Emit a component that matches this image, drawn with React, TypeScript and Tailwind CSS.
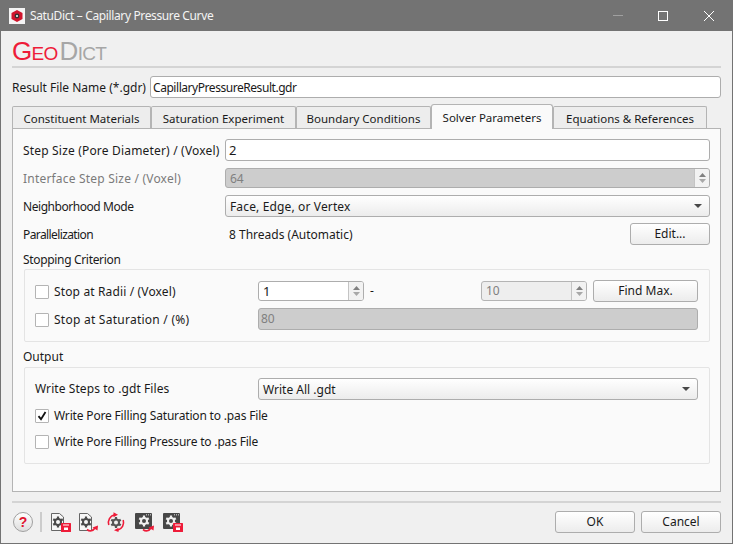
const FONT = "font-['Noto_Sans','Open_Sans',sans-serif]";

function Spin({ size = 20 }: { size?: number }) {
  return (
    <div className="flex w-[15px] shrink-0 flex-col items-center justify-center gap-[2px] border-l border-[#c4c4c4] bg-[#f2f2f2]" style={{ height: size - 2 }}>
      <svg width="7" height="4" viewBox="0 0 7 4"><path d="M3.5 0L7 4H0z" fill="#808080" /></svg>
      <svg width="7" height="4" viewBox="0 0 7 4"><path d="M0 0h7L3.5 4z" fill="#a8a8a8" /></svg>
    </div>
  );
}

function Arrow() {
  return (
    <svg width="8" height="4" viewBox="0 0 8 4" className="mr-[7px] shrink-0"><path d="M0 0h8L4 4z" fill="#484848" /></svg>
  );
}

function Combo({ text, className }: { text: string; className: string }) {
  return (
    <div className={`flex h-[22px] items-center justify-between rounded-[3px] border border-[#adadad] bg-gradient-to-b from-[#ffffff] to-[#ececec] pl-[4px] ${className}`}>
      <span className="pt-[2px]">{text}</span>
      <Arrow />
    </div>
  );
}

function Button({ text, className }: { text: string; className: string }) {
  return (
    <div className={`flex h-[22px] items-center justify-center rounded-[3px] border border-[#adadad] bg-gradient-to-b from-[#ffffff] to-[#ececec] ${className}`}>
      {text}
    </div>
  );
}

function Check({ checked, label, labelClass = "" }: { checked?: boolean; label: string; labelClass?: string }) {
  return (
    <div className="flex items-center">
      <div className="mr-[5px] flex h-[14px] w-[14px] items-center justify-center rounded-[1px] border border-[#b4b4b4] bg-white">
        {checked && (
          <svg width="10" height="10" viewBox="0 0 10 10"><path d="M1.5 5.2L4 8.2L8.5 1" fill="none" stroke="#111" strokeWidth="1.8" /></svg>
        )}
      </div>
      <span className={labelClass}>{label}</span>
    </div>
  );
}

function Gear({ cx, cy, fill = "#4a4a4a", hole = "#f6f6f6" }: { cx: number; cy: number; fill?: string; hole?: string }) {
  return (
    <g>
      {[0, 60, 120].map((a) => (
        <rect key={a} x={cx - 1.1} y={cy - 5.5} width="2.2" height="11" fill={fill} transform={`rotate(${a} ${cx} ${cy})`} />
      ))}
      <circle cx={cx} cy={cy} r="4" fill={fill} />
      <circle cx={cx} cy={cy} r="2" fill={hole} />
    </g>
  );
}

function Page() {
  return <path d="M1.5 1.5H9.5L13.5 5V18.5H1.5z" fill="#f6f6f6" stroke="#666" strokeWidth="1" />;
}

function Dark() {
  return (
    <g>
      <rect x="1" y="1" width="17" height="16" rx="1" fill="#474747" />
      <rect x="12" y="2" width="1" height="1.5" fill="#b0b0b0" />
      <rect x="14" y="2" width="1" height="1.5" fill="#b0b0b0" />
      <rect x="16" y="2" width="1" height="1.5" fill="#b0b0b0" />
    </g>
  );
}

function Disk() {
  return (
    <g>
      <rect x="11" y="11" width="10" height="9" rx="0.5" fill="#ee1c39" />
      <rect x="13" y="12.5" width="6" height="1" fill="#fff" />
      <rect x="14" y="15.5" width="4" height="2.5" fill="#fff" />
    </g>
  );
}

function Swoosh() {
  return (
    <g>
      <path d="M9 17.5C12 19.8 15 19 17 16" fill="none" stroke="#ee1c39" strokeWidth="1.6" />
      <path d="M20 13.5L19.5 18.5L14.5 15.5z" fill="#ee1c39" />
    </g>
  );
}

function ToolIcon({ kind }: { kind: number }) {
  return (
    <svg width="22" height="20" viewBox="0 0 22 20" className="shrink-0">
      {kind === 0 && (<><Page /><Gear cx={8} cy={10} /><Disk /></>)}
      {kind === 1 && (<><Page /><Gear cx={8} cy={10} /><Swoosh /></>)}
      {kind === 2 && (
        <>
          <Gear cx={10} cy={10.5} fill="#555555" hole="#f0f0f0" />
          <path d="M2.8 13A8 8 0 0 1 8.5 2.8" fill="none" stroke="#ee1c39" strokeWidth="1.6" />
          <path d="M17.2 8A8 8 0 0 1 11.5 18.2" fill="none" stroke="#ee1c39" strokeWidth="1.6" />
          <path d="M7.5 0.3L12 2.8L7.5 5.3z" fill="#ee1c39" />
          <path d="M12.5 15.7L8 18.2L12.5 20z" fill="#ee1c39" />
        </>
      )}
      {kind === 3 && (<><Dark /><Gear cx={10} cy={9} fill="#f0f0f0" hole="#474747" /><Swoosh /></>)}
      {kind === 4 && (<><Dark /><Gear cx={9} cy={9} fill="#f0f0f0" hole="#474747" /><Disk /></>)}
    </svg>
  );
}

export default function App() {
  const tabs = [
    { label: "Constituent Materials", w: "w-[139px]" },
    { label: "Saturation Experiment", w: "w-[145px]" },
    { label: "Boundary Conditions", w: "w-[135px]" },
  ];

  return (
    <div className={`flex h-[544px] w-[733px] flex-col overflow-hidden bg-[#737373] text-[12px] leading-none text-[#1a1a1a] ${FONT}`}>
      {/* Title bar */}
      <div className="flex h-[31px] shrink-0 items-center text-white">
        <div className="ml-[9px] flex h-[16px] w-[16px] items-center justify-center bg-[#f4f4f4]">
          <svg width="14" height="14" viewBox="0 0 14 14">
            <path d="M7 1L12.5 4V10L7 13L1.5 10V4z" fill="#d0142c" />
            <circle cx="7" cy="7" r="2.4" fill="#333" />
            <circle cx="7" cy="7" r="1" fill="#fff" />
          </svg>
        </div>
        <span className="ml-[5px] tracking-[-0.37px] text-[#f4f4f4]">SatuDict – Capillary Pressure Curve</span>
        <div className="ml-auto mr-[19px] flex items-center">
          <div className="mr-[35px] h-[1px] w-[10px] bg-[#a0a0a0]" />
          <div className="mr-[36px] h-[10px] w-[10px] border border-white" />
          <svg width="10" height="10" viewBox="0 0 10 10"><path d="M0 0L10 10M10 0L0 10" stroke="#fff" strokeWidth="1" /></svg>
        </div>
      </div>

      {/* Window body */}
      <div className="mx-[1px] mb-[1px] flex min-h-0 flex-1 flex-col bg-[#f0f0f0] px-[11px]">
        {/* Logo */}
        <div className="mt-[6px] h-[31px] shrink-0 border-b-2 border-[#d4d4d4] font-['Liberation_Sans',sans-serif] leading-[28px] tracking-[-0.7px]">
          <span className="text-[26px] text-[#ee1c39]">G</span>
          <span className="text-[19px] text-[#ee1c39]">EO</span>
          <span className="ml-[2px] text-[26px] text-[#a6a6a6]">D</span>
          <span className="text-[19px] text-[#a6a6a6]">ICT</span>
        </div>

        {/* Result file */}
        <div className="mt-[8px] flex h-[22px] shrink-0 items-center">
          <span className="w-[138px] pt-[1px]">Result File Name (*.gdr)</span>
          <div className="flex h-[22px] flex-1 items-center rounded-[3px] border border-[#adadad] bg-white pl-[2px] pt-[1px] tracking-[-0.45px]">CapillaryPressureResult.gdr</div>
        </div>

        {/* Tabs */}
        <div className="relative z-10 mt-[6px] flex h-[24px] shrink-0 items-end text-[11.5px]">
          {tabs.map((t) => (
            <div key={t.label} className={`flex h-[22px] items-center justify-center rounded-t-[2px] border border-b-0 border-[#b4b4b4] bg-[#ededed] pt-[2px] ${t.w}`}>{t.label}</div>
          ))}
          <div className="-mb-[1px] flex h-[25px] w-[122px] items-center justify-center rounded-t-[3px] border border-b-0 border-[#b4b4b4] bg-[#fafafa] pt-[1px]">Solver Parameters</div>
          <div className="flex h-[22px] w-[154px] items-center justify-center rounded-t-[2px] border border-b-0 border-[#b4b4b4] bg-[#ededed] pt-[2px]">Equations &amp; References</div>
        </div>

        {/* Panel */}
        <div className="h-[364px] shrink-0 border border-[#b4b4b4] bg-[#fafafa] pl-[10px] pr-[10px] pt-[10px]">
          <div className="flex h-[22px] items-center">
            <span className="w-[202px] pt-[2px] tracking-[0.18px]">Step Size (Pore Diameter) / (Voxel)</span>
            <div className="flex h-[22px] flex-1 items-center rounded-[3px] border border-[#adadad] bg-white pl-[3px] pt-[1px] text-[13px]">2</div>
          </div>
          <div className="mt-[7px] flex h-[20px] items-center text-[#7a7a7a]">
            <span className="w-[202px] pt-[2px] tracking-[0.2px]">Interface Step Size / (Voxel)</span>
            <div className="flex h-[20px] flex-1 items-center justify-between overflow-hidden rounded-[3px] border border-[#adadad] bg-[#cdcdcd] pl-[4px] text-[#808080]">
              <span className="pt-[2px]">64</span>
              <Spin />
            </div>
          </div>
          <div className="mt-[7px] flex h-[22px] items-center">
            <span className="w-[202px] pt-[2px] tracking-[-0.45px]">Neighborhood Mode</span>
            <Combo text="Face, Edge, or Vertex" className="flex-1 tracking-[0.14px]" />
          </div>
          <div className="mt-[6px] flex h-[22px] items-center">
            <span className="w-[206px] pt-[2px] tracking-[-0.6px]">Parallelization</span>
            <span className="pt-[2px]">8 Threads (Automatic)</span>
            <Button text="Edit..." className="ml-auto w-[80px]" />
          </div>

          <div className="mt-[8px] h-[16px] leading-[14px] tracking-[-0.33px]">Stopping Criterion</div>
          <div className="ml-[1px] h-[73px] rounded-[2px] border border-[#e4e4e4] pl-[10px] pr-[11px] pt-[10px]">
            <div className="flex h-[22px] items-center">
              <div className="w-[223px] pt-[2px]"><Check label="Stop at Radii / (Voxel)" labelClass="tracking-[0.14px]" /></div>
              <div className="flex h-[20px] w-[106px] items-center justify-between overflow-hidden rounded-[3px] border border-[#adadad] bg-white pl-[4px]">
                <span className="text-[13px]">1</span>
                <Spin />
              </div>
              <span className="ml-[6px]">-</span>
              <div className="ml-auto flex h-[20px] w-[106px] items-center justify-between overflow-hidden rounded-[3px] border border-[#b4b4b4] bg-[#eeeeee] pl-[4px] text-[#808080]">
                <span>10</span>
                <Spin />
              </div>
              <Button text="Find Max." className="ml-[6px] w-[105px]" />
            </div>
            <div className="mt-[6px] flex h-[22px] items-center">
              <div className="w-[223px] pt-[2px]"><Check label="Stop at Saturation / (%)" labelClass="tracking-[0.25px]" /></div>
              <div className="flex h-[22px] flex-1 items-center rounded-[3px] border border-[#adadad] bg-[#cdcdcd] pl-[2px] text-[#808080]">80</div>
            </div>
          </div>

          <div className="mt-[7px] h-[18px] leading-[15px]">Output</div>
          <div className="ml-[1px] h-[97px] rounded-[2px] border border-[#e4e4e4] pl-[10px] pr-[11px] pt-[10px]">
            <div className="flex h-[22px] items-center">
              <span className="w-[223px] tracking-[0.08px]">Write Steps to .gdt Files</span>
              <Combo text="Write All .gdt" className="flex-1" />
            </div>
            <div className="mt-[9px]"><Check checked label="Write Pore Filling Saturation to .pas File" labelClass="tracking-[-0.17px]" /></div>
            <div className="mt-[12px]"><Check label="Write Pore Filling Pressure to .pas File" labelClass="tracking-[-0.18px]" /></div>
          </div>
        </div>

        {/* Footer */}
        <div className="mt-[9px] h-[2px] shrink-0 bg-[#d4d4d4]" />
        <div className="mt-[8px] flex h-[22px] shrink-0 items-center">
          <div className="ml-[1px] flex h-[20px] w-[20px] items-center justify-center rounded-full border border-[#a0a0a0] bg-gradient-to-b from-white to-[#dddddd] font-['Liberation_Sans',sans-serif] text-[14px] font-bold text-[#e0142f]">?</div>
          <div className="ml-[7px] h-[20px] w-[2px] bg-[#cccccc]" />
          <div className="ml-[8px] flex items-center gap-[6px]">
            {[0, 1, 2, 3, 4].map((k) => (
              <ToolIcon key={k} kind={k} />
            ))}
          </div>
          <Button text="OK" className="ml-auto w-[80px]" />
          <Button text="Cancel" className="ml-[6px] w-[80px]" />
        </div>
      </div>
    </div>
  );
}
